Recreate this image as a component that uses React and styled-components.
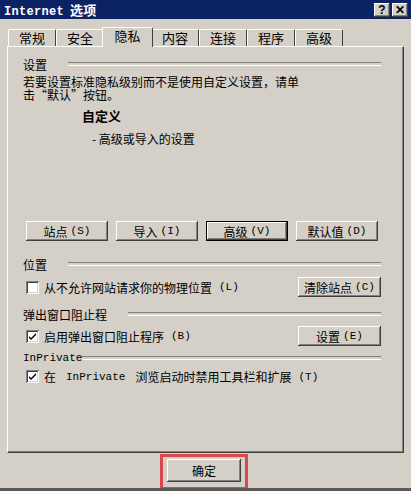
import React from "react"
import styled, { createGlobalStyle, css } from "styled-components"

const GlobalStyle = createGlobalStyle`
    html, body {
        margin: 0;
        padding: 0;
        background: #d4d0c8;
    }
    * {
        box-sizing: border-box;
    }
`

const font = `"Noto Sans CJK SC", "Liberation Sans", sans-serif`

const Window = styled.div`
    width: 411px;
    height: 491px;
    background: #d4d0c8;
    display: flex;
    flex-direction: column;
    font-family: ${font};
    font-size: 12px;
    color: #000;
    border-bottom: 3px solid #5a5955;
    overflow: hidden;
`

const TitleBar = styled.div`
    height: 19px;
    background: #0b2365;
    display: flex;
    align-items: center;
    padding: 0 3px 0 4px;
`

const Title = styled.div`
    color: #fff;
    font-weight: bold;
    font-size: 13px;
    flex: 1;
    letter-spacing: 0.3px;

    span {
        font-family: "Liberation Mono", monospace;
        font-size: 12px;
        margin-right: 6px;
    }
`

const TitleButton = styled.div`
    width: 16px;
    height: 14px;
    background: #d4d0c8;
    margin-left: 2px;
    display: flex;
    align-items: center;
    justify-content: center;
    font: bold 12px "Liberation Sans", sans-serif;
    box-shadow: inset -1px -1px #404040, inset 1px 1px #fff, inset -2px -2px #808080;
    line-height: 1;
`

const Body = styled.div`
    flex: 1;
    display: flex;
    flex-direction: column;
    padding: 0 7px;
`

const TabRow = styled.div`
    display: flex;
    align-items: flex-end;
    height: 27px;
    padding-left: 1px;
`

const Tab = styled.div`
    width: 48px;
    height: 17px;
    display: flex;
    justify-content: center;
    align-items: center;
    font-size: 13px;
    border-top: 1px solid #fff;
    border-left: 1px solid #fff;
    border-right: 1px solid #404040;
    border-top-left-radius: 2px;
    border-top-right-radius: 2px;
    padding-bottom: 1px;
    ${props => props.active && css`
        height: 20px;
        width: 51px;
        margin: 0 -2px;
        position: relative;
        z-index: 1;
        background: #d4d0c8;
        padding-bottom: 4px;
        margin-bottom: -1px;
    `}
`

const Panel = styled.div`
    height: 407px;
    border-top: 1px solid #fff;
    border-left: 1px solid #fff;
    border-right: 1px solid #404040;
    border-bottom: 1px solid #404040;
    box-shadow: inset -1px -1px #808080;
    padding: 10px 22px 0 15px;
    display: flex;
    flex-direction: column;
`

const GroupHead = styled.div`
    display: flex;
    align-items: center;
    height: 14px;
    margin-top: ${props => props.top}px;
    font-family: ${props => props.mono ? `"Liberation Mono", monospace` : font};
    font-size: ${props => props.mono ? "11px" : "12px"};

    &:after {
        content: "";
        flex: 1;
        height: 2px;
        border-top: 1px solid #808080;
        border-bottom: 1px solid #fff;
        margin-left: ${props => props.gap}px;
    }
`

const Paragraph = styled.p`
    margin: 4px 0 0;
    line-height: 13px;
    font-size: 12px;
    width: 340px;
`

const Level = styled.div`
    margin: 7px 0 0 59px;
    font-weight: bold;
    font-size: 13px;
    line-height: 16px;
`

const LevelNote = styled.div`
    margin: 7px 0 0 69px;
    font-size: 12px;
    line-height: 16px;
`

const ButtonRow = styled.div`
    display: flex;
    gap: 8px;
    margin: 74px 0 0 3px;
`

const Button = styled.div`
    width: ${props => props.w || 82}px;
    height: ${props => props.h || 20}px;
    flex-shrink: 0;
    display: flex;
    align-items: center;
    justify-content: center;
    font-size: 12px;
    background: #d4d0c8;
    box-shadow: ${props => props.isDefault
        ? "inset 0 0 0 1px #000, inset -2px -2px #404040, inset 2px 2px #fff, inset -3px -3px #808080"
        : "inset -1px -1px #404040, inset 1px 1px #fff, inset -2px -2px #808080"};

    small {
        font-family: "Liberation Mono", monospace;
        font-size: 11px;
        margin-left: 3px;
    }
`

const Row = styled.div`
    display: flex;
    align-items: center;
    justify-content: space-between;
    margin-top: ${props => props.top}px;
    padding-left: 3px;
`

const CheckLabel = styled.label`
    display: flex;
    align-items: center;
    gap: 5px;
    font-size: 12px;

    small {
        font-family: "Liberation Mono", monospace;
        font-size: 11px;
        margin-left: 2px;
    }
    code {
        font-family: "Liberation Mono", monospace;
        font-size: 11px;
        margin: 0 5px;
    }
`

const Box = styled.span`
    width: 13px;
    height: 13px;
    background: #fff;
    box-shadow: inset 1px 1px #808080, inset -1px -1px #fff, inset 2px 2px #404040, inset -2px -2px #d4d0c8;
    display: flex;
    align-items: center;
    justify-content: center;
`

const Footer = styled.div`
    flex: 1;
    display: flex;
    align-items: flex-start;
    padding: 1px 0 0 153px;
`

const Highlight = styled.div`
    border: 3px solid #d9474c;
    padding: 2px 4px 5px 4px;
`

const Check = ({ checked }) =>
    <Box>
        {checked &&
            <svg width="9" height="9" viewBox="0 0 9 9">
                <path d="M1 4 L3 6 L8 1 L8 3 L3 8 L1 6 Z" fill="#000" />
            </svg>
        }
    </Box>

const tabs = ["常规", "安全", "隐私", "内容", "连接", "程序", "高级"]

export default function App() {
    return (
        <Window>
            <GlobalStyle />
            <TitleBar>
                <Title><span>Internet</span>选项</Title>
                <TitleButton>?</TitleButton>
                <TitleButton>✕</TitleButton>
            </TitleBar>
            <Body>
                <TabRow>
                    {tabs.map(t => <Tab key={t} active={t === "隐私"}>{t}</Tab>)}
                </TabRow>
                <Panel>
                    <GroupHead top={0} gap={21}>设置</GroupHead>
                    <Paragraph>
                        若要设置标准隐私级别而不是使用自定义设置，请单<br />
                        击“默认”按钮。
                    </Paragraph>
                    <Level>自定义</Level>
                    <LevelNote>- 高级或导入的设置</LevelNote>
                    <ButtonRow>
                        <Button>站点<small>(S)</small></Button>
                        <Button>导入<small>(I)</small></Button>
                        <Button isDefault>高级<small>(V)</small></Button>
                        <Button>默认值<small>(D)</small></Button>
                    </ButtonRow>
                    <GroupHead top={16} gap={21}>位置</GroupHead>
                    <Row top={6}>
                        <CheckLabel><Check />从不允许网站请求你的物理位置<small>(L)</small></CheckLabel>
                        <Button w={83}>清除站点<small>(C)</small></Button>
                    </Row>
                    <GroupHead top={10} gap={21}>弹出窗口阻止程</GroupHead>
                    <Row top={5}>
                        <CheckLabel><Check checked />启用弹出窗口阻止程序<small>(B)</small></CheckLabel>
                        <Button w={83}>设置<small>(E)</small></Button>
                    </Row>
                    <GroupHead top={5} gap={0} mono>InPrivate</GroupHead>
                    <Row top={3}>
                        <CheckLabel><Check checked />在<code>InPrivate</code>浏览启动时禁用工具栏和扩展<small>(T)</small></CheckLabel>
                    </Row>
                </Panel>
                <Footer>
                    <Highlight>
                        <Button w={74} h={23}>确定</Button>
                    </Highlight>
                </Footer>
            </Body>
        </Window>
    )
}
